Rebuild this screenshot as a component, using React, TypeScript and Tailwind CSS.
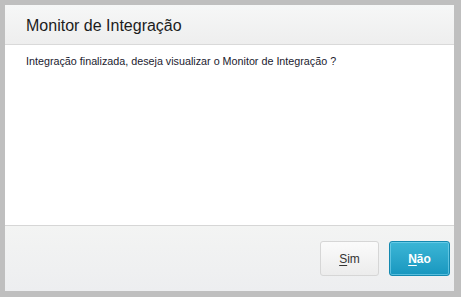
import React from 'react';

export default function App() {
  return (
    <div
      className="w-[461px] h-[297px] bg-[#bfbfbf] pt-[5px] pl-[5px] pr-[7px] pb-[6px]"
      style={{ fontFamily: '"Liberation Sans", Arial, sans-serif' }}
    >
      <div className="h-full flex flex-col bg-white">
        {/* Header */}
        <div className="h-[40px] shrink-0 bg-gradient-to-b from-[#f6f7f7] to-[#eeeeee] border-b border-[#d9d9d9] flex items-center pl-[21px] pt-[2px]">
          <span className="text-[16px] text-[#1c1c1c] leading-none">Monitor de Integração</span>
        </div>

        {/* Body */}
        <div className="flex-1 pl-[21px] pt-[11px]">
          <p className="text-[10.75px] text-[#1a1a2e] leading-none">
            Integração finalizada, deseja visualizar o Monitor de Integração ?
          </p>
        </div>

        {/* Footer */}
        <div className="h-[66px] shrink-0 bg-gradient-to-b from-[#f3f4f3] to-[#edeef0] border-t border-[#d6d6d6] flex items-start justify-end gap-[10px] pt-[15px] pr-[4px]">
          <button className="w-[59px] h-[35px] rounded-[3px] border border-[#d6d6d6] bg-gradient-to-b from-[#fbfbfb] to-[#ececec] text-[12px] text-[#333333]">
            <span className="underline underline-offset-2">S</span>im
          </button>
          <button className="w-[61px] h-[35px] rounded-[3px] border border-[#1489b0] bg-gradient-to-b from-[#3bb6d6] to-[#1797bf] shadow-[inset_0_0_0_1px_rgba(130,215,240,0.6)] text-[12px] font-bold text-white">
            <span className="underline underline-offset-2">N</span>ão
          </button>
        </div>
      </div>
    </div>
  );
}
